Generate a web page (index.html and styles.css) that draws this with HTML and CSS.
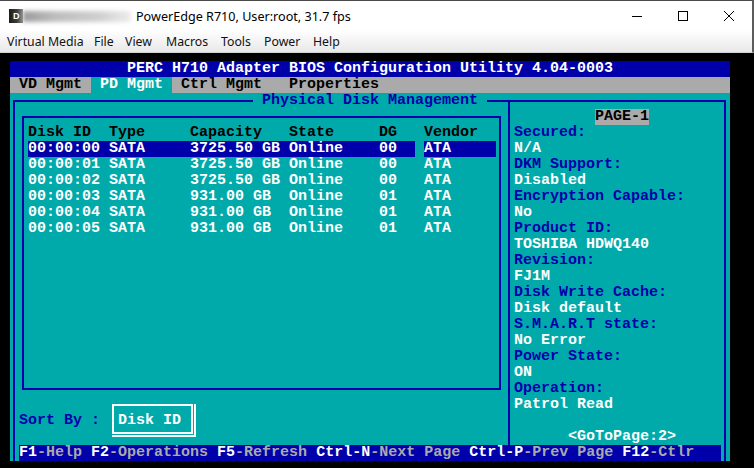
FILE: index.html
```html
<!DOCTYPE html>
<html lang="en">
<head>
<meta charset="utf-8">
<title>PowerEdge R710 Console</title>
<link rel="stylesheet" href="styles.css">
</head>
<body>
<div class="win">
  <header class="titlebar">
    <div class="appicon">D</div>
    <div class="smudge"></div>
    <div class="wtitle">PowerEdge R710, User:root, 31.7 fps</div>
    <div class="ctrls">
      <div class="ctrl"><svg width="10" height="10" viewBox="0 0 10 10"><path d="M0 5.5H10" stroke="#000" stroke-width="1" fill="none"/></svg></div>
      <div class="ctrl"><svg width="10" height="10" viewBox="0 0 10 10"><rect x="0.5" y="0.5" width="9" height="9" stroke="#000" stroke-width="1" fill="none"/></svg></div>
      <div class="ctrl"><svg width="10" height="10" viewBox="0 0 10 10"><path d="M0 0L10 10M10 0L0 10" stroke="#000" stroke-width="1" fill="none"/></svg></div>
    </div>
  </header>
  <nav class="menubar">
    <span>Virtual Media</span><span>File</span><span>View</span><span>Macros</span><span>Tools</span><span>Power</span><span>Help</span>
  </nav>
  <main class="console">
    <div class="screen">
      <div class="frames">
        <div class="f-outer"></div>
        <div class="f-div"></div>
        <div class="f-inner"></div>
        <div class="f-sort"></div>
      </div>
      <div class="text">
        <div class="ln row-title">             PERC H710 Adapter BIOS Configuration Utility 4.04-0003</div>
        <div class="ln row-tabs"> VD Mgmt <span class="tab-on"> PD Mgmt </span> Ctrl Mgmt   Properties</div>
        <div class="ln">                           <span class="ttl"> Physical Disk Management </span></div>
        <div class="ln"><span class="lft"></span><span class="rt">         <span class="page">PAGE-1</span></span></div>
        <div class="ln"><span class="lft k">  Disk ID  Type     Capacity   State     DG   Vendor</span><span class="rt b">Secured:</span></div>
        <div class="ln"><span class="lft">  <span class="hl">00:00:00 SATA     3725.50 GB Online    00  </span> <span class="hl">ATA     </span></span><span class="rt">N/A</span></div>
        <div class="ln"><span class="lft">  00:00:01 SATA     3725.50 GB Online    00   ATA</span><span class="rt b">DKM Support:</span></div>
        <div class="ln"><span class="lft">  00:00:02 SATA     3725.50 GB Online    00   ATA</span><span class="rt">Disabled</span></div>
        <div class="ln"><span class="lft">  00:00:03 SATA     931.00 GB  Online    01   ATA</span><span class="rt b">Encryption Capable:</span></div>
        <div class="ln"><span class="lft">  00:00:04 SATA     931.00 GB  Online    01   ATA</span><span class="rt">No</span></div>
        <div class="ln"><span class="lft">  00:00:05 SATA     931.00 GB  Online    01   ATA</span><span class="rt b">Product ID:</span></div>
        <div class="ln"><span class="lft"></span><span class="rt">TOSHIBA HDWQ140</span></div>
        <div class="ln"><span class="lft"></span><span class="rt b">Revision:</span></div>
        <div class="ln"><span class="lft"></span><span class="rt">FJ1M</span></div>
        <div class="ln"><span class="lft"></span><span class="rt b">Disk Write Cache:</span></div>
        <div class="ln"><span class="lft"></span><span class="rt">Disk default</span></div>
        <div class="ln"><span class="lft"></span><span class="rt b">S.M.A.R.T state:</span></div>
        <div class="ln"><span class="lft"></span><span class="rt">No Error</span></div>
        <div class="ln"><span class="lft"></span><span class="rt b">Power State:</span></div>
        <div class="ln"><span class="lft"></span><span class="rt">ON</span></div>
        <div class="ln"><span class="lft"></span><span class="rt b">Operation:</span></div>
        <div class="ln"><span class="lft"></span><span class="rt">Patrol Read</span></div>
        <div class="ln"> <span class="b">Sort By :</span>  Disk ID</div>
        <div class="ln"><span class="lft"></span><span class="rt">      &lt;GoToPage:2&gt;</span></div>
        <div class="ln"> <span class="fbar"><span class="key">F1</span>-Help <span class="key">F2</span>-Operations <span class="key">F5</span>-Refresh <span class="key">Ctrl-N</span>-Next Page <span class="key">Ctrl-P</span>-Prev Page <span class="key">F12</span>-Ctlr</span></div>
      </div>
    </div>
  </main>
</div>
</body>
</html>
```
FILE: styles.css
```css
* { box-sizing: border-box; }
html, body {
  margin: 0;
  width: 754px;
  height: 468px;
  overflow: hidden;
  background: #000;
}
.win {
  width: 754px;
  height: 468px;
  display: flex;
  flex-direction: column;
  background: #000;
}
.titlebar {
  height: 31px;
  flex: none;
  background: #fff;
  border-top: 1px solid #4a4a4a;
  border-right: 2px solid #5c5c5c;
  display: flex;
  align-items: center;
}
.appicon {
  width: 14px;
  height: 14px;
  margin-left: 9px;
  padding-left: 4px;
  background: linear-gradient(90deg, #1c1c1c, #3c3c3c 55%, #8c8c8c);
  color: #fff;
  font: bold 9px/14px "Liberation Sans", sans-serif;
}
.smudge {
  width: 108px;
  height: 11px;
  margin-right: 5px;
  background: linear-gradient(90deg, #9c9c9c, #bdbdbd 30%, #cfcfcf 70%, #ececec);
  filter: blur(2px);
}
.wtitle {
  font: 12.6px "Noto Sans", sans-serif;
  color: #000;
}
.ctrls {
  margin-left: auto;
  display: flex;
}
.ctrl {
  width: 46px;
  height: 29px;
  display: flex;
  align-items: center;
  justify-content: center;
}
.menubar {
  height: 22px;
  flex: none;
  background: linear-gradient(#fefefe, #e8e8e8);
  border-bottom: 1px solid #d4d4d4;
  border-right: 2px solid #5c5c5c;
  display: grid;
  grid-template-columns: 87px 31px 41px 55px 43px 49px auto;
  align-items: center;
  padding-left: 7px;
  font: 12.3px "Noto Sans", sans-serif;
  color: #111;
}
.console {
  flex: 1;
  padding: 8px 0 0 10px;
}
.screen {
  position: relative;
  width: 720px;
  height: 400px;
  background: #00aaaa;
  font: bold 15px/16px "Liberation Mono", monospace;
  color: #fff;
}
.frames {
  position: absolute;
  inset: 0;
  display: grid;
  grid-template-columns: repeat(80, 9px);
  grid-template-rows: repeat(25, 16px);
}
.f-outer {
  grid-column: 1 / 81;
  grid-row: 3 / 26;
  margin: 7px 4px 0 3px;
  border: 2px solid #0000aa;
  border-bottom: 0;
}
.f-div {
  grid-column: 56 / 57;
  grid-row: 3 / 25;
  margin: 7px 0 0 3px;
  border-left: 2px solid #0000aa;
}
.f-inner {
  grid-column: 2 / 56;
  grid-row: 4 / 22;
  margin: 7px 4px 7px 3px;
  border: 2px solid #0000aa;
}
.f-sort {
  grid-column: 12 / 22;
  grid-row: 22 / 25;
  margin: 7px 6px 11px 3px;
  border: 2px solid #fff;
  position: relative;
}
.f-sort::after {
  content: "";
  position: absolute;
  left: -2px;
  top: -2px;
  right: -5px;
  bottom: -5px;
  border-right: 2px solid #fff;
  border-bottom: 2px solid #fff;
}
.text {
  position: relative;
}
.ln {
  height: 16px;
  white-space: pre;
  overflow: hidden;
}
.row-title {
  background: #0000aa;
  color: #fff;
}
.row-tabs {
  background: #aaaaaa;
  color: #000;
}
.tab-on {
  background: #00aaaa;
  color: #fff;
}
.ttl {
  background: #00aaaa;
  color: #0000aa;
}
.lft {
  display: inline-block;
  vertical-align: top;
  width: 504px;
  height: 16px;
}
.page {
  background: #aaaaaa;
  color: #000;
}
.k { color: #000; }
.b { color: #0000aa; }
.hl {
  background: #0000aa;
  color: #fff;
}
.fbar {
  display: inline-block;
  vertical-align: top;
  width: 702px;
  height: 16px;
  background: #0000aa;
  color: #aaaaaa;
}
.key { color: #fff; }
```
